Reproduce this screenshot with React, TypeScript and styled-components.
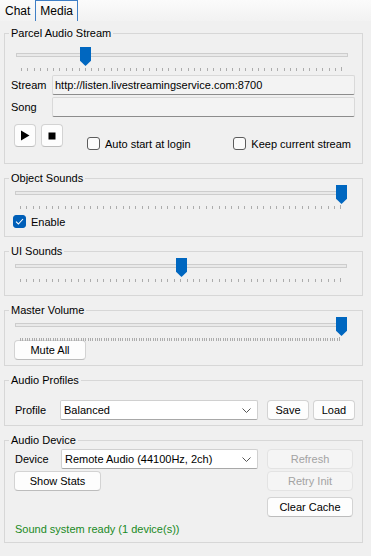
import React from 'react';
import styled, { createGlobalStyle } from 'styled-components';

const GlobalStyle = createGlobalStyle`
  html, body {
    margin: 0;
    padding: 0;
    background: #f0f0f0;
  }
  body {
    font-family: "Liberation Sans", Arial, sans-serif;
    font-size: 11px;
    color: #000;
  }
  * {
    box-sizing: border-box;
  }
`;

export default function App() {
  return (
    <Window>
      <GlobalStyle />
      <TabBar>
        <Tab>Chat</Tab>
        <Tab $active>Media</Tab>
      </TabBar>

      <Panel>
        <Group>
          <Legend>Parcel Audio Stream</Legend>
          <Body $pad="7px 7px 13px 6px">
            <Slider value={0.2} ticks={51} left={5} />
            <Rows>
              <FieldRow>
                <FieldLabel $w={41}>Stream</FieldLabel>
                <LineEdit readOnly value="http://listen.livestreamingservice.com:8700" />
              </FieldRow>
              <FieldRow>
                <FieldLabel $w={41}>Song</FieldLabel>
                <LineEdit readOnly value="" />
              </FieldRow>
            </Rows>
            <TransportRow>
              <IconButton aria-label="Play">
                <svg width="10" height="11" viewBox="0 0 10 11">
                  <path d="M1 0.5 L9.5 5.5 L1 10.5 Z" fill="#000" />
                </svg>
              </IconButton>
              <IconButton aria-label="Stop">
                <svg width="8" height="8" viewBox="0 0 8 8">
                  <rect x="0.5" y="0.5" width="7" height="7" fill="#000" />
                </svg>
              </IconButton>
              <Check label="Auto start at login" $ml={19} />
              <Spacer />
              <Check label="Keep current stream" $mr={4} />
            </TransportRow>
          </Body>
        </Group>

        <Group>
          <Legend>Object Sounds</Legend>
          <Body $pad="0 7px 8px 8px">
            <Slider value={1} ticks={51} left={2} />
            <Check label="Enable" checked $mt={6} />
          </Body>
        </Group>

        <Group>
          <Legend>UI Sounds</Legend>
          <Body $pad="0 7px 13px 8px">
            <Slider value={0.5} ticks={51} left={2} />
          </Body>
        </Group>

        <Group>
          <Legend>Master Volume</Legend>
          <Body $pad="0 7px 5px 9px">
            <Slider value={1} ticks={138} left={1} />
            <PushButton $w={72} style={{ marginTop: -1 }}>Mute All</PushButton>
          </Body>
        </Group>

        <Group>
          <Legend>Audio Profiles</Legend>
          <Body $pad="13px 7px 5px 10px">
            <FieldRow>
              <FieldLabel $w={45}>Profile</FieldLabel>
              <Combo $w={198}>
                <span>Balanced</span>
                <Chevron />
              </Combo>
              <PushButton $w={42} $ml={9}>Save</PushButton>
              <PushButton $w={42} $ml={4}>Load</PushButton>
            </FieldRow>
          </Body>
        </Group>

        <Group>
          <Legend>Audio Device</Legend>
          <Body $pad="2px 8px 6px 9px">
            <DeviceGrid>
              <FieldRow>
                <FieldLabel $w={46} $ml={1}>Device</FieldLabel>
                <Combo $w={198}>
                  <span>Remote Audio (44100Hz, 2ch)</span>
                  <Chevron />
                </Combo>
              </FieldRow>
              <PushButton $w={86} disabled>Refresh</PushButton>
              <PushButton $w={87}>Show Stats</PushButton>
              <PushButton $w={86} disabled>Retry Init</PushButton>
              <span />
              <PushButton $w={86} $h={20} style={{ marginTop: 4 }}>Clear Cache</PushButton>
            </DeviceGrid>
            <Status>Sound system ready (1 device(s))</Status>
          </Body>
        </Group>
      </Panel>
    </Window>
  );
}

function Slider({ value, ticks, left }: { value: number; ticks: number; left: number }) {
  return (
    <SliderBox $ml={left}>
      <Groove />
      <TickRow>
        {Array.from({ length: ticks }).map((_, i) => (
          <Tick key={i} />
        ))}
      </TickRow>
      <Handle style={{ left: Math.round(value * (332 - 11)) }} />
    </SliderBox>
  );
}

function Check({
  label,
  checked,
  $ml,
  $mr,
  $mt,
}: {
  label: string;
  checked?: boolean;
  $ml?: number;
  $mr?: number;
  $mt?: number;
}) {
  return (
    <CheckWrap $ml={$ml} $mr={$mr} $mt={$mt}>
      <CheckBox $checked={checked}>
        {checked && (
          <svg width="9" height="7" viewBox="0 0 9 7">
            <path d="M1 3.6 L3.4 6 L8 1" fill="none" stroke="#fff" strokeWidth="1.1" />
          </svg>
        )}
      </CheckBox>
      <span>{label}</span>
    </CheckWrap>
  );
}

function Chevron() {
  return (
    <svg width="9" height="5" viewBox="0 0 9 5">
      <path d="M0.5 0.5 L4.5 4.5 L8.5 0.5" fill="none" stroke="#555" strokeWidth="1" />
    </svg>
  );
}

const Window = styled.div`
  width: 371px;
  height: 556px;
  background: #f0f0f0;
  overflow: hidden;
`;

const TabBar = styled.div`
  display: flex;
  height: 21px;
  background: linear-gradient(#fbfbfb, #f2f2f2);
`;

const Tab = styled.div<{ $active?: boolean }>`
  display: flex;
  align-items: center;
  height: 21px;
  padding: 0 4px;
  font-size: 12px;
  border: 1px solid ${(p) => (p.$active ? '#3f7fc6' : 'transparent')};
  border-bottom: none;
`;

const Panel = styled.div`
  display: flex;
  flex-direction: column;
  gap: 7px;
  padding: 5px 8px 0 4px;
`;

const Group = styled.fieldset`
  margin: 0;
  padding: 0;
  min-width: 0;
  border: 1px solid #d7d7d7;
`;

const Legend = styled.legend`
  margin-left: 4px;
  padding: 0 2px;
  line-height: 14px;
  font-size: 11px;
`;

const Body = styled.div<{ $pad: string }>`
  display: flex;
  flex-direction: column;
  padding: ${(p) => p.$pad};
`;

const SliderBox = styled.div<{ $ml: number }>`
  position: relative;
  display: flex;
  flex-direction: column;
  width: 332px;
  height: 24px;
  padding-top: 6px;
  margin-left: ${(p) => p.$ml}px;
`;

const Groove = styled.div`
  height: 4px;
  background: #e9e9e9;
  border: 1px solid #cdcdcd;
`;

const TickRow = styled.div`
  display: flex;
  justify-content: space-between;
  align-items: flex-end;
  height: 4px;
  margin-top: 10px;
  padding: 0 5px;
`;

const Tick = styled.span`
  width: 1px;
  height: 3px;
  background: #acacac;

  &:last-child {
    height: 4px;
  }
`;

const Handle = styled.div`
  position: absolute;
  top: 0;
  width: 11px;
  height: 19px;
  background: #0067c0;
  clip-path: polygon(0 0, 100% 0, 100% 72%, 50% 100%, 0 72%);
`;

const Rows = styled.div`
  display: flex;
  flex-direction: column;
  gap: 2px;
  margin-top: 4px;
`;

const FieldRow = styled.div`
  display: flex;
  align-items: center;
`;

const FieldLabel = styled.span<{ $w: number; $ml?: number }>`
  width: ${(p) => p.$w}px;
  margin-left: ${(p) => p.$ml || 0}px;
  flex: none;
  font-size: 11px;
`;

const LineEdit = styled.input`
  flex: 1;
  min-width: 0;
  height: 20px;
  padding: 0 2px;
  font-family: "Liberation Sans", Arial, sans-serif;
  font-size: 11px;
  color: #000;
  background: #f3f3f3;
  border: 1px solid #d9d9d9;
  border-bottom-color: #8c8c8c;
  border-radius: 2px;
  outline: none;
`;

const TransportRow = styled.div`
  display: flex;
  align-items: flex-start;
  margin-top: 7px;
  padding-left: 3px;
  gap: 5px;
`;

const IconButton = styled.button`
  display: flex;
  align-items: center;
  justify-content: center;
  width: 22px;
  height: 23px;
  padding: 0;
  background: #fdfdfd;
  border: 1px solid #d3d3d3;
  border-bottom-color: #bdbdbd;
  border-radius: 4px;
`;

const Spacer = styled.div`
  flex: 1;
`;

const CheckWrap = styled.label<{ $ml?: number; $mr?: number; $mt?: number }>`
  display: flex;
  align-items: center;
  gap: 5px;
  height: 13px;
  margin-left: ${(p) => p.$ml || 0}px;
  margin-right: ${(p) => p.$mr || 0}px;
  margin-top: ${(p) => (p.$mt === undefined ? 13 : p.$mt)}px;
  font-size: 11px;
`;

const CheckBox = styled.span<{ $checked?: boolean }>`
  display: flex;
  align-items: center;
  justify-content: center;
  width: 13px;
  height: 13px;
  border-radius: 3px;
  background: ${(p) => (p.$checked ? '#005fb8' : '#fbfbfb')};
  border: 1px solid ${(p) => (p.$checked ? '#005fb8' : '#5c5c5c')};
`;

const PushButton = styled.button<{ $w: number; $h?: number; $ml?: number }>`
  width: ${(p) => p.$w}px;
  height: ${(p) => p.$h || 20}px;
  margin-left: ${(p) => p.$ml || 0}px;
  padding: 0;
  font-family: "Liberation Sans", Arial, sans-serif;
  font-size: 11px;
  color: #000;
  background: #fdfdfd;
  border: 1px solid #d3d3d3;
  border-bottom-color: #bcbcbc;
  border-radius: 4px;

  &:disabled {
    color: #a3a3a3;
    background: #f5f5f5;
    border-color: #e3e3e3;
  }
`;

const Combo = styled.div<{ $w: number }>`
  display: flex;
  align-items: center;
  justify-content: space-between;
  width: ${(p) => p.$w}px;
  height: 20px;
  padding: 0 6px 0 3px;
  background: #fff;
  border: 1px solid #d0d0d0;
  border-bottom-color: #a8a8a8;
  border-radius: 2px;
  font-size: 11px;
`;

const DeviceGrid = styled.div`
  display: grid;
  grid-template-columns: 244px 86px;
  column-gap: 9px;
  row-gap: 2px;
  align-items: start;
`;

const Status = styled.div`
  margin-top: 5px;
  margin-left: 1px;
  line-height: 14px;
  color: #1a8a24;
  font-size: 11px;
`;
